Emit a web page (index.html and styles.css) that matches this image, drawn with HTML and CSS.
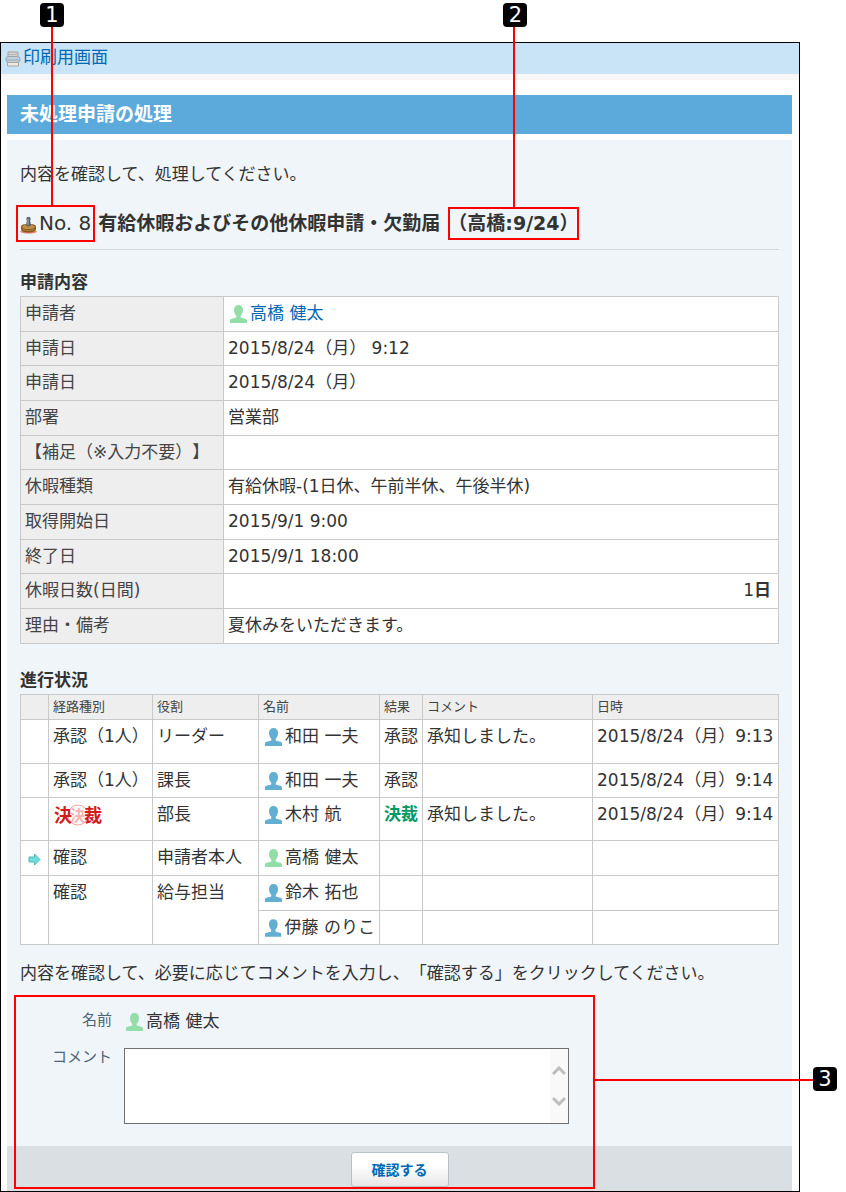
FILE: index.html
```html
<!DOCTYPE html>
<html lang="ja">
<head>
<meta charset="utf-8">
<meta name="viewport" content="width=device-width, initial-scale=1">
<title>未処理申請の処理</title>
<link rel="stylesheet" href="styles.css">
</head>
<body>
<svg class="sprite" aria-hidden="true">
  <symbol id="person" viewBox="0 0 17 18">
    <path d="M8.500 0C5.500 0 4 2 4 5c0 2.600 1 4.600 2.300 5.700v1.800C5 13.600 0 12.800 0 15.500V18h17v-2.500c0-2.700-5-1.900-6.300-3v-1.800C12 9.600 13 7.600 13 5c0-3-1.500-5-4.500-5z"/>
  </symbol>
</svg>

<div class="window">
  <div class="toolbar">
    <a class="print-link" href="#">
      <svg class="print-icon" viewBox="0 0 16 16" aria-hidden="true">
        <path d="M3 1h10v5H3z" fill="#d5d3cf" stroke="#a5a39f"/>
        <path d="M4 3.500h8" stroke="#b9b7b3"/>
        <rect x="1" y="5.500" width="14" height="6" rx="2.500" fill="#c3d0d9" stroke="#97a5b0"/>
        <path d="M2 9h12" stroke="#98a9b5"/>
        <path d="M2.500 11.500h11v3.500h-11z" fill="#efe9df" stroke="#aaa79f"/>
      </svg>印刷用画面</a>
  </div>

  <main class="main">
    <h1 class="title">未処理申請の処理</h1>

    <div class="panel">
      <div class="content">
        <p class="lead">内容を確認して、処理してください。</p>

        <h2 class="subject">
          <span class="number">
            <svg class="stamp-icon" viewBox="0 0 17 18" aria-hidden="true">
              <ellipse cx="8.500" cy="15.500" rx="8.300" ry="2" fill="#e0826d"/>
              <path d="M1 10.500c0-1.800 3-2.500 7.500-2.500s7.500.7 7.500 2.500v2c0 2.500-3 4-7.500 4S1 15 1 12.500z" fill="#8a5a1c"/>
              <ellipse cx="8.500" cy="10.800" rx="6.500" ry="2.300" fill="#c08e45"/>
              <path d="M3 13.500c3 1.300 8 1.300 11 0" stroke="#b58440" fill="none"/>
              <path d="M7 4h3l1 5.500c-1 1-4 1-5 0z" fill="#56606a"/>
              <circle cx="8.500" cy="3" r="2.200" fill="#5d6872"/>
              <path d="M8 3v6" stroke="#a7b2ba"/>
            </svg>No. 8
            <span class="callout callout-number"><span class="marker">1</span></span>
          </span>
          <span class="form-name">有給休暇およびその他休暇申請・欠勤届</span>
          <span class="applicant">（高橋:9/24）<span class="callout callout-applicant"><span class="marker">2</span></span></span>
        </h2>

        <h3 class="section">申請内容</h3>
        <table class="grid details">
          <colgroup><col class="c-label"><col></colgroup>
          <tbody>
            <tr><th scope="row">申請者</th><td><a class="user me" href="#"><svg class="person" aria-hidden="true"><use href="#person"/></svg>高橋 健太</a></td></tr>
            <tr><th scope="row">申請日</th><td>2015/8/24（月） 9:12</td></tr>
            <tr><th scope="row">申請日</th><td>2015/8/24（月）</td></tr>
            <tr><th scope="row">部署</th><td>営業部</td></tr>
            <tr><th scope="row">【補足（※入力不要）】</th><td></td></tr>
            <tr><th scope="row">休暇種類</th><td>有給休暇-(1日休、午前半休、午後半休)</td></tr>
            <tr><th scope="row">取得開始日</th><td>2015/9/1 9:00</td></tr>
            <tr><th scope="row">終了日</th><td>2015/9/1 18:00</td></tr>
            <tr><th scope="row">休暇日数(日間)</th><td class="amount">1<b>日</b></td></tr>
            <tr><th scope="row">理由・備考</th><td>夏休みをいただきます。</td></tr>
          </tbody>
        </table>

        <h3 class="section section-next">進行状況</h3>
        <table class="grid progress">
          <colgroup><col class="c-mark"><col class="c-route"><col class="c-role"><col class="c-name"><col class="c-result"><col><col class="c-date"></colgroup>
          <thead>
            <tr><th></th><th scope="col">経路種別</th><th scope="col">役割</th><th scope="col">名前</th><th scope="col">結果</th><th scope="col">コメント</th><th scope="col">日時</th></tr>
          </thead>
          <tbody>
            <tr class="tall"><td></td><td>承認（1人）</td><td>リーダー</td><td><span class="user"><svg class="person" aria-hidden="true"><use href="#person"/></svg>和田 一夫</span></td><td>承認</td><td>承知しました。</td><td>2015/8/24（月）9:13</td></tr>
            <tr class="short"><td></td><td>承認（1人）</td><td>課長</td><td><span class="user"><svg class="person" aria-hidden="true"><use href="#person"/></svg>和田 一夫</span></td><td>承認</td><td></td><td>2015/8/24（月）9:14</td></tr>
            <tr class="sealed"><td></td>
              <td>
                <svg class="seal" viewBox="0 0 50 26" role="img" aria-label="決裁">
                  <circle cx="25" cy="13" r="10" class="seal-ring"/>
                  <text x="17" y="19" class="seal-faint">決</text>
                  <text x="1" y="20" class="seal-text">決</text>
                  <text x="31" y="20" class="seal-text">裁</text>
                </svg>
              </td>
              <td>部長</td><td><span class="user"><svg class="person" aria-hidden="true"><use href="#person"/></svg>木村 航</span></td><td class="decided">決裁</td><td>承知しました。</td><td>2015/8/24（月）9:14</td></tr>
            <tr><td class="current">
                <svg class="arrow" viewBox="0 0 13 13" aria-hidden="true"><path d="M1 4h5.500V1l5.500 5.500-5.500 5.500V9H1z" fill="#69e0dd" stroke="#55b5b5"/></svg>
              </td><td>確認</td><td>申請者本人</td><td><span class="user me"><svg class="person" aria-hidden="true"><use href="#person"/></svg>高橋 健太</span></td><td></td><td></td><td></td></tr>
            <tr><td rowspan="2"></td><td rowspan="2">確認</td><td rowspan="2">給与担当</td><td><span class="user"><svg class="person" aria-hidden="true"><use href="#person"/></svg>鈴木 拓也</span></td><td></td><td></td><td></td></tr>
            <tr class="short"><td><span class="user"><svg class="person" aria-hidden="true"><use href="#person"/></svg>伊藤 のりこ</span></td><td></td><td></td><td></td></tr>
          </tbody>
        </table>

        <p class="guide">内容を確認して、必要に応じてコメントを入力し、「確認する」をクリックしてください。</p>
      </div>

      <form class="confirm">
        <div class="fields">
          <span class="label">名前</span>
          <span class="user me"><svg class="person" aria-hidden="true"><use href="#person"/></svg>高橋 健太</span>
          <label class="label" for="comment">コメント</label>
          <div class="comment-box">
            <textarea id="comment" class="comment"></textarea>
            <span class="scroll">
              <svg viewBox="0 0 14 10" aria-hidden="true"><path d="M1 8l6-6 6 6"/></svg>
              <svg viewBox="0 0 14 10" aria-hidden="true"><path d="M1 2l6 6 6-6"/></svg>
            </span>
          </div>
        </div>
        <div class="actions"><button class="submit" type="button">確認する</button></div>
        <span class="callout callout-form"></span>
        <span class="form-leader"></span>
        <span class="marker marker-form">3</span>
      </form>
    </div>
  </main>
</div>
</body>
</html>
```

FILE: styles.css
```css
* { box-sizing: border-box; }

body {
  margin: 0;
  padding: 42px 46px 0 0;
  background: #fff;
  color: #333;
  font: 17px/24px "DejaVu Sans", "Noto Sans CJK JP", sans-serif;
  text-spacing-trim: space-all;
}

h1, h2, h3, p { margin: 0; }

a { color: #0068b3; text-decoration: none; }

.sprite { position: absolute; width: 0; height: 0; }

.window { border: 1px solid #000; }

/* Top bar */
.toolbar {
  height: 37px;
  padding: 2px 4px;
  background: #c9e4f6;
  border-bottom: 6px solid #f6f6f6;
}
.print-link { display: flex; align-items: center; gap: 2px; }
.print-icon { width: 16px; height: 16px; margin-top: 4px; }

.main { padding: 15px 7px 0 6px; }

.title {
  padding: 7px 13px 8px;
  background: #5ca9db;
  color: #fff;
  font-size: 19px;
  line-height: 24px;
}

.panel { margin-top: 6px; background: #eff5f8; }
.content { padding: 22px 13px 0; }

/* Subject line */
.subject {
  display: flex;
  margin-top: 25px;
  padding-bottom: 14px;
  border-bottom: 1px solid #d0d6da;
  font-size: 19px;
  line-height: 24px;
}
.number {
  position: relative;
  display: flex;
  align-items: center;
  gap: 2px;
  margin-right: 7px;
  font-size: 20px;
  font-weight: normal;
}
.stamp-icon { width: 17px; height: 18px; margin-top: 4px; }
.form-name { margin-right: 8px; }
.applicant { position: relative; white-space: nowrap; }

.section { margin: 20px 0 2px; font-size: 17px; line-height: 24px; }
.section-next { margin-top: 24px; }

/* Tables */
.grid {
  width: 100%;
  border-collapse: collapse;
  table-layout: fixed;
  background: #fff;
}
.grid th, .grid td {
  padding: 4px 4px 0;
  border: 1px solid #c9c9c9;
  text-align: left;
  vertical-align: top;
  white-space: nowrap;
}
.grid th { background: #eee; color: #444; font-weight: normal; }
.grid tr { height: 35px; }

.details tr:nth-child(3n+2), .grid .short { height: 34px; }
.c-label { width: 203px; }
.details .amount { padding-right: 7px; text-align: right; }

.progress thead tr { height: 25px; }
.progress thead th { padding-top: 0; font-size: 13px; line-height: 24px; }
.progress .tall { height: 44px; }
.progress .sealed { height: 43px; }
.c-mark { width: 28px; }
.c-route { width: 104px; }
.c-role { width: 106px; }
.c-name { width: 121px; }
.c-result { width: 43px; }
.c-date { width: 186px; }
.progress .decided { color: #009966; font-weight: bold; }
.progress .current { padding: 12px 0 0 7px; }

.user { display: flex; align-items: center; gap: 3px; padding-left: 2px; }
.person { width: 17px; height: 18px; margin-top: 2px; fill: #62afd2; }
.me .person { fill: #93dda8; }

.arrow { display: block; width: 13px; height: 13px; }

.seal { display: block; width: 50px; height: 26px; }
.seal-ring { fill: none; stroke: #f5a3a3; }
.seal-text, .seal-faint { font-family: "Noto Sans CJK JP", sans-serif; font-weight: bold; }
.seal-text { font-size: 18px; fill: #d01c1c; }
.seal-faint { font-size: 15px; fill: #f7b3b3; }

.guide { margin-top: 16px; }

/* Confirmation form */
.confirm { position: relative; }
.fields {
  display: grid;
  grid-template-columns: 105px minmax(0, 445px);
  column-gap: 12px;
  row-gap: 15px;
  padding: 24px 13px 22px 0;
}
.label { color: #4e6478; font-size: 15px; line-height: 22px; text-align: right; }
.label[for] { line-height: 18px; }
.comment-box { position: relative; }
.comment {
  display: block;
  width: 100%;
  height: 76px;
  padding: 4px 22px 4px 4px;
  border: 1px solid #707070;
  background: #fff;
  font: inherit;
  resize: none;
}
.scroll {
  position: absolute;
  inset: 1px 1px 1px auto;
  display: flex;
  flex-direction: column;
  align-items: center;
  justify-content: center;
  gap: 20px;
  width: 18px;
  background: #f9f9f9;
}
.scroll svg { width: 14px; height: 10px; fill: none; stroke: #bdbdbd; stroke-width: 3; }

.actions {
  display: flex;
  justify-content: center;
  padding: 6px 0 4px;
  background: #dadfe3;
}
.submit {
  height: 35px;
  padding: 0 20px;
  border: 1px solid #b9c2c6;
  border-radius: 3px;
  background: linear-gradient(#fff 40%, #e6e6e6);
  color: #0068b3;
  font: bold 14px/24px "DejaVu Sans", "Noto Sans CJK JP", sans-serif;
}

/* Numbered callouts */
.callout { position: absolute; border: 2px solid #f00; pointer-events: none; }
.callout::before {
  content: "";
  position: absolute;
  bottom: 100%;
  width: 2px;
  background: #f00;
}
.marker {
  position: absolute;
  width: 24px;
  height: 24px;
  border-radius: 4px;
  background: #000;
  color: #fff;
  font-size: 21px;
  font-weight: normal;
  line-height: 24px;
  text-align: center;
}
.callout-number { inset: -6px -4px -7px -4px; }
.callout-number::before { left: 33px; height: 180px; }
.callout-number .marker { left: 22px; bottom: calc(100% + 180px); }
.callout-applicant { inset: -4px 0 -5px 0; }
.callout-applicant::before { left: 63px; height: 182px; }
.callout-applicant .marker { left: 53px; bottom: calc(100% + 182px); }
.callout-form { top: 10px; bottom: 2px; left: 7px; width: 581px; }
.callout-form::before { display: none; }
.form-leader {
  position: absolute;
  top: 94px;
  left: 588px;
  right: -21px;
  height: 2px;
  background: #f00;
}
.marker-form { top: 82px; right: -45px; }
```
